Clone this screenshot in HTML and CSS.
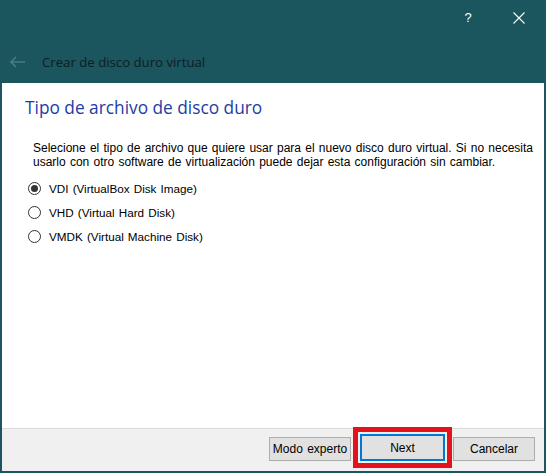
FILE: index.html
```html
<!DOCTYPE html>
<html lang="es">
<head>
<meta charset="utf-8">
<title>Crear de disco duro virtual</title>
<link rel="stylesheet" href="styles.css">
</head>
<body>
<div class="window">
  <div class="titlebar">
    <span class="tb-btn help">?</span>
    <span class="tb-btn close">
      <svg width="12" height="12" viewBox="0 0 12 12"><path d="M0.5 0.5 L11.5 11.5 M11.5 0.5 L0.5 11.5" stroke="#ffffff" stroke-width="1.1" fill="none"/></svg>
    </span>
  </div>
  <div class="nav">
    <span class="back">
      <svg width="16" height="12" viewBox="0 0 16 12"><path d="M6 1 L1 6 L6 11 M1 6 L15 6" stroke="#4a7b82" stroke-width="1.6" fill="none"/></svg>
    </span>
    <span class="nav-title">Crear de disco duro virtual</span>
  </div>
  <div class="content">
    <h1 class="page-title">Tipo de archivo de disco duro</h1>
    <p class="desc">Selecione el tipo de archivo que quiere usar para el nuevo disco duro virtual. Si no necesita usarlo con otro software de virtualización puede dejar esta configuración sin cambiar.</p>
    <div class="options">
      <div class="option">
        <svg class="radio" width="13" height="13" viewBox="0 0 13 13"><circle cx="6.5" cy="6.5" r="6" fill="#ffffff" stroke="#333333" stroke-width="1"/><circle cx="6.5" cy="6.5" r="3.5" fill="#333333"/></svg>
        <span>VDI (VirtualBox Disk Image)</span>
      </div>
      <div class="option">
        <svg class="radio" width="13" height="13" viewBox="0 0 13 13"><circle cx="6.5" cy="6.5" r="6" fill="#ffffff" stroke="#333333" stroke-width="1"/></svg>
        <span>VHD (Virtual Hard Disk)</span>
      </div>
      <div class="option">
        <svg class="radio" width="13" height="13" viewBox="0 0 13 13"><circle cx="6.5" cy="6.5" r="6" fill="#ffffff" stroke="#333333" stroke-width="1"/></svg>
        <span>VMDK (Virtual Machine Disk)</span>
      </div>
    </div>
  </div>
  <div class="footer">
    <button class="btn expert">Modo experto</button>
    <button class="btn next">Next</button>
    <button class="btn cancel">Cancelar</button>
  </div>
</div>
</body>
</html>
```
FILE: styles.css
```css
html, body {
  margin: 0;
  padding: 0;
}
body {
  width: 546px;
  height: 473px;
  overflow: hidden;
  background: #1b555d;
  font-family: "Liberation Sans", Arial, sans-serif;
}
.window {
  box-sizing: border-box;
  height: 473px;
  display: flex;
  flex-direction: column;
  padding: 0 2px 2px 2px;
}
.titlebar {
  height: 40px;
  display: flex;
  justify-content: flex-end;
  align-items: flex-start;
  padding-right: 10px;
}
.tb-btn {
  width: 30px;
  height: 35px;
  display: flex;
  align-items: center;
  justify-content: center;
  color: #ffffff;
}
.help {
  font-family: "Liberation Sans", Arial, sans-serif;
  font-size: 13px;
  margin-right: 21px;
}
.nav {
  height: 43px;
  display: flex;
  align-items: center;
}
.back {
  width: 16px;
  margin-left: 8px;
  display: flex;
  align-items: center;
}
.nav-title {
  margin-left: 16px;
  font-family: "Open Sans", "Noto Sans", sans-serif;
  font-size: 13.2px;
  color: #0a1f23;
}
.content {
  flex: 1;
  background: #ffffff;
  border-bottom: 1px solid #d9d9d9;
  padding: 0 2px 0 23px;
}
.page-title {
  margin: 13px 0 0 0;
  font-family: "Open Sans", "Noto Sans", sans-serif;
  font-weight: normal;
  font-size: 17.3px;
  line-height: 24px;
  color: #1c3ca6;
}
.desc {
  margin: 21px 0 0 8px;
  font-size: 12px;
  word-spacing: 0.9px;
  line-height: 14px;
  color: #000000;
}
.options {
  margin: 13px 0 0 3px;
  display: flex;
  flex-direction: column;
  gap: 11px;
}
.option {
  display: flex;
  align-items: center;
  gap: 8px;
  font-size: 11.7px;
  word-spacing: 0.9px;
  line-height: 13px;
  color: #000000;
}
.radio {
  flex: none;
}
.footer {
  height: 42px;
  background: #f0f0f0;
  display: flex;
  justify-content: flex-end;
  align-items: flex-end;
  padding: 0 9px 10px 0;
  box-sizing: border-box;
}
.btn {
  box-sizing: border-box;
  height: 24px;
  margin: 0;
  padding: 0;
  background: #e1e1e1;
  border: 1px solid #adadad;
  font-family: "Liberation Sans", Arial, sans-serif;
  font-size: 12px;
  word-spacing: 1px;
  color: #000000;
}
.expert {
  width: 82px;
}
.next {
  width: 85px;
  height: 27px;
  margin-left: 9px;
  border: 2px solid #0078d7;
  outline: 5px solid #e3121b;
  outline-offset: 2px;
}
.cancel {
  width: 82px;
  margin-left: 8px;
}
```
